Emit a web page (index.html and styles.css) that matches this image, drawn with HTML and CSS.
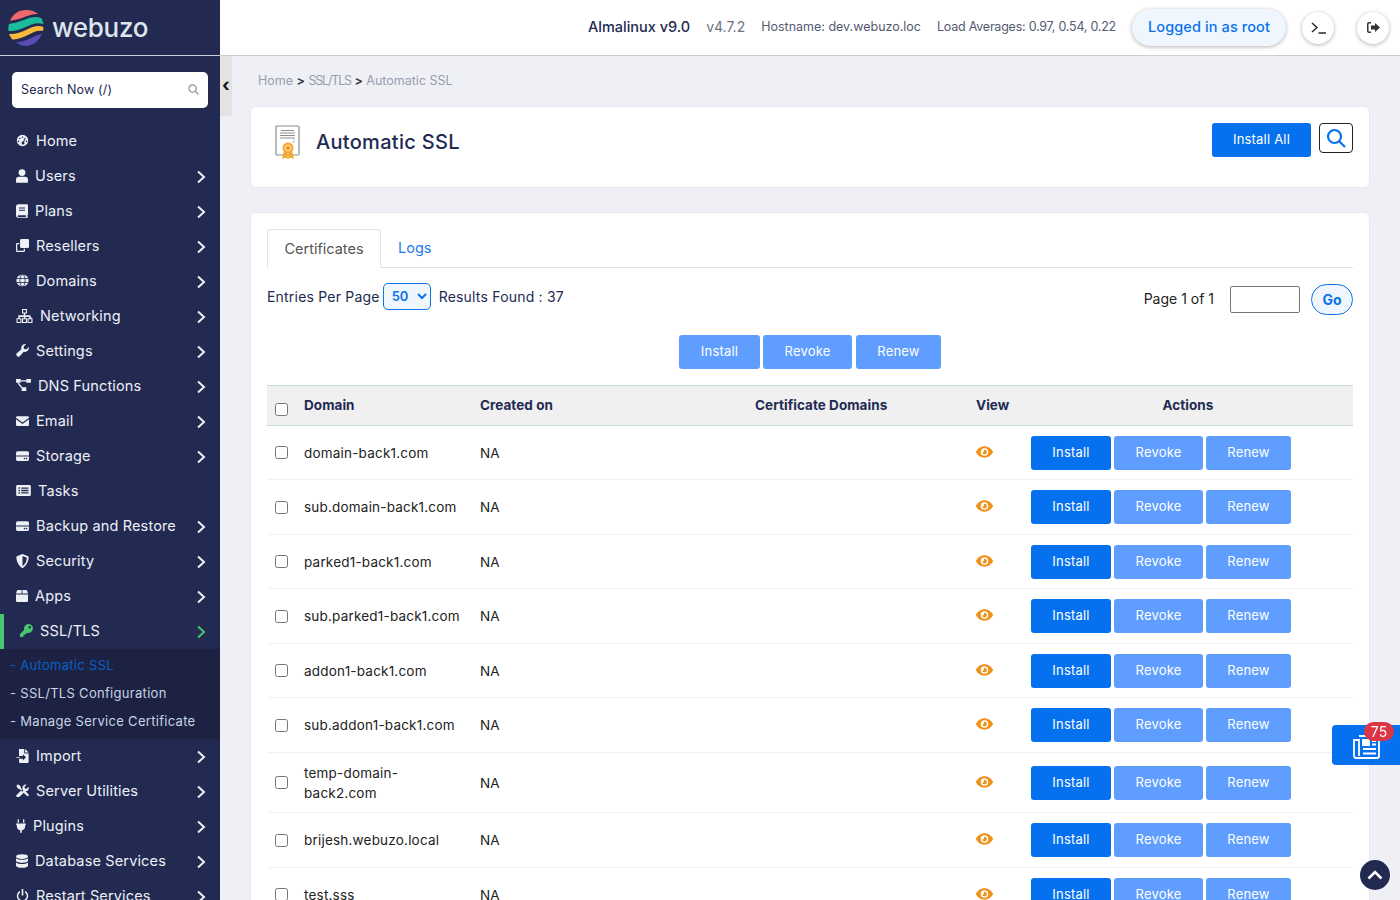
FILE: index.html
```html
<!DOCTYPE html>
<html lang="en">
<head>
    <meta charset="UTF-8">
    <meta name="viewport" content="width=device-width, initial-scale=1.0">
    <title>Automatic SSL - Webuzo</title>
    <link rel="stylesheet" href="styles.css">
</head>
<body>
    <svg class="defs" aria-hidden="true">
        <symbol id="chev" viewBox="0 0 10 14"><path d="M2 1.5 8 7l-6 5.5" fill="none" stroke="currentColor" stroke-width="2"/></symbol>
        <symbol id="i-home" viewBox="0 0 16 16"><path fill-rule="evenodd" d="M8 1a7 7 0 1 1 0 14A7 7 0 0 1 8 1zM8 3a1 1 0 1 0 0 2 1 1 0 0 0 0-2zM4.500 4.500a1 1 0 1 0 0 2 1 1 0 0 0 0-2zM3 8a1 1 0 1 0 0 2 1 1 0 0 0 0-2zM13 8a1 1 0 1 0 0 2 1 1 0 0 0 0-2zM11 4.200 8.700 9.300a1.800 1.800 0 1 0 1.200.5l2-5z"/></symbol>
        <symbol id="i-user" viewBox="0 0 14 16"><circle cx="7" cy="4" r="4"/><path d="M3.500 9h7A3.500 3.500 0 0 1 14 12.500V15a1 1 0 0 1-1 1H1a1 1 0 0 1-1-1v-2.500A3.500 3.500 0 0 1 3.500 9z"/></symbol>
        <symbol id="i-book" viewBox="0 0 14 16"><path fill-rule="evenodd" d="M3 0h10a1 1 0 0 1 1 1v11a1 1 0 0 1-.7.900V14.500a1 1 0 0 1 .7.500v.500a.5.500 0 0 1-.5.500H3a3 3 0 0 1-3-3V3a3 3 0 0 1 3-3zM3.500 4v1.200h7V4zM3.500 6.500v1.200h7V6.500zM3 13a1 1 0 0 0 0 2h8.500v-2z"/></symbol>
        <symbol id="i-clone" viewBox="0 0 16 16"><path d="M6.500 0h8A1.500 1.500 0 0 1 16 1.500v8a1.500 1.500 0 0 1-1.500 1.500h-8A1.500 1.500 0 0 1 5 9.500v-8A1.500 1.500 0 0 1 6.500 0z"/><path d="M1.500 5H4v1.500H1.800a.3.300 0 0 0-.3.300v7.400c0 .2.100.3.300.3h7.400a.3.300 0 0 0 .3-.3V12H11v2.500A1.500 1.500 0 0 1 9.500 16h-8A1.500 1.500 0 0 1 0 14.500v-8A1.500 1.500 0 0 1 1.500 5z"/></symbol>
        <symbol id="i-globe" viewBox="0 0 16 16"><circle cx="8" cy="8" r="7.500"/><g fill="none" stroke="#222a52"><ellipse cx="8" cy="8" rx="3.200" ry="7.500"/><path d="M.5 5.500h15M.5 10.500h15"/></g></symbol>
        <symbol id="i-net" viewBox="0 0 16 14"><path fill-rule="evenodd" d="M5.500 0h5v4.500H8.700v1.800H14v1.700h.9v1.200H16V14h-5V9.200h1.800V8H8.700v1.200h1.800V14h-5V9.200h1.800V8H3.200v1.200H5V14H0V9.200h1.800V6.300h5.500V4.500H5.500zM6.600 1v2.500h2.800V1zM1.100 10.300v2.600h2.800v-2.600zM6.600 10.300v2.600h2.800v-2.600zM12.100 10.300v2.600h2.800v-2.600z"/></symbol>
        <symbol id="i-wrench" viewBox="0 0 16 16"><path d="M15.800 3.700c.3 1.700-.2 3.400-1.400 4.600-1.300 1.300-3.200 1.700-4.800 1.200l-5 5.600a2.100 2.100 0 0 1-3-.1l-.6-.6a2.100 2.100 0 0 1 0-3l5.600-5C6.100 4.700 6.500 2.900 7.800 1.600 9 .4 10.700-.1 12.300.2l-2.900 2.900.5 2.900 2.900.5z"/></symbol>
        <symbol id="i-dns" viewBox="0 0 16 14"><path d="M0 0h5v4H0zM11 0h5v4h-5zM6 9h5v4H6z"/><path d="M5 1.300h6v1.400H5zM2.800 4l4 5-1.100.9-4-5z"/></symbol>
        <symbol id="i-mail" viewBox="0 0 16 12"><path d="M1.500 0h13A1.500 1.500 0 0 1 16 1.500v.6L8 7.900 0 2.100v-.6A1.500 1.500 0 0 1 1.500 0z"/><path d="M0 3.900l8 5.800 8-5.800v6.600a1.500 1.500 0 0 1-1.500 1.500h-13A1.500 1.500 0 0 1 0 10.500z"/></symbol>
        <symbol id="i-hdd" viewBox="0 0 16 12"><path d="M2 0h12a2 2 0 0 1 2 2v3.500H0V2a2 2 0 0 1 2-2z"/><path fill-rule="evenodd" d="M0 6.500h16V10a2 2 0 0 1-2 2H2a2 2 0 0 1-2-2zM10.500 8.200a1 1 0 1 0 0 2 1 1 0 0 0 0-2zM13 8.200a1 1 0 1 0 0 2 1 1 0 0 0 0-2z"/></symbol>
        <symbol id="i-list" viewBox="0 0 16 12"><path fill-rule="evenodd" d="M1.500 0h13A1.500 1.500 0 0 1 16 1.500v9a1.500 1.500 0 0 1-1.500 1.500h-13A1.500 1.500 0 0 1 0 10.500v-9A1.500 1.500 0 0 1 1.500 0zM2.500 2.500v1.600h1.600V2.500zM5.500 2.600v1.400h8V2.600zM2.500 5.200v1.600h1.600V5.200zM5.500 5.300v1.400h8V5.300zM2.500 7.900v1.600h1.600V7.900zM5.500 8v1.400h8V8z"/></symbol>
        <symbol id="i-shield" viewBox="0 0 14 16"><path fill-rule="evenodd" d="M7 0l6.400 2.600c.4.200.6.500.6.900C14 9.500 10.500 14.200 7.400 15.900a1 1 0 0 1-.8 0C3.500 14.200 0 9.500 0 3.500c0-.4.200-.7.600-.9zM7 2.300v11.600c2.500-1.400 4.800-5 5-9.500z"/></symbol>
        <symbol id="i-box" viewBox="0 0 14 14"><path d="M2.500 0h4v4.200H0L1 1a1.500 1.500 0 0 1 1.500-1zM7.500 0h4A1.500 1.500 0 0 1 13 1l1 3.200H7.500zM0 5.200h14v7.300a1.500 1.500 0 0 1-1.500 1.500h-11A1.500 1.500 0 0 1 0 12.500z"/></symbol>
        <symbol id="i-key" viewBox="0 0 16 16"><path fill-rule="evenodd" d="M10.500 0a5.500 5.500 0 1 1-1.600 10.800l-1.400 1.500H5.800v1.900H3.900V16H.8a.8.8 0 0 1-.8-.8v-2.400c0-.2.100-.4.200-.5l5.100-5.100A5.500 5.500 0 0 1 10.500 0zM12 2.600a1.500 1.500 0 1 0 0 3 1.500 1.500 0 0 0 0-3z"/></symbol>
        <symbol id="i-import" viewBox="0 0 14 16"><path fill-rule="evenodd" d="M3.500 0H9v4.200c0 .4.400.8.800.8H14v9.500a1.500 1.500 0 0 1-1.500 1.500h-8A1.500 1.500 0 0 1 3 14.500V11h4.500v2l3.500-3.500L7.500 6v2H3V.5c0-.3.200-.5.500-.5z"/><path d="M10 0l4 4h-4zM0 9h4v1H0z"/></symbol>
        <symbol id="i-tools" viewBox="0 0 16 16"><path d="M.4 2.400 2.400.4l3.500 2.700v1.700l3.200 3.200-1.400 1.400L4.500 6.200H2.900zM15.400 3.500l-2.400 2.400-2.100-.4-.4-2.100L12.900.9a4 4 0 0 0-4.800 5.200L1 13.100a2.100 2.100 0 0 0 3 3l5.400-5.400 3.900 3.900a1.400 1.400 0 0 0 2-2l-3.600-3.600a4 4 0 0 0 3.700-5.500z"/></symbol>
        <symbol id="i-plug" viewBox="0 0 12 16"><path d="M2 0h1.500v4h-1.500zM8.500 0H10v4H8.500zM0 5h12v1.500H11v1.700A5 5 0 0 1 7 13v3H5v-3A5 5 0 0 1 1 8.200V6.500H0z"/></symbol>
        <symbol id="i-db" viewBox="0 0 14 16"><ellipse cx="7" cy="2.800" rx="7" ry="2.800"/><path d="M0 4.700C1.500 6 4.200 6.500 7 6.500s5.500-.5 7-1.800v3C14 9 10.900 10 7 10S0 9 0 7.700zM0 9.700C1.500 11 4.200 11.500 7 11.500s5.500-.5 7-1.800v3.500c0 1.500-3.100 2.800-7 2.800s-7-1.300-7-2.800z"/></symbol>
        <symbol id="i-power" viewBox="0 0 16 16"><path d="M7 0h2v8H7z"/><path d="M4.800 2.200v2.300a5.200 5.200 0 1 0 6.400 0V2.200a7 7 0 1 1-6.400 0z"/></symbol>
        <symbol id="i-eye" viewBox="0 0 18 12"><path fill-rule="evenodd" d="M9 0c4 0 7.300 2.600 8.900 5.500a1 1 0 0 1 0 1C16.300 9.400 13 12 9 12S1.700 9.400.1 6.500a1 1 0 0 1 0-1C1.700 2.600 5 0 9 0zM9 2a4 4 0 1 0 0 8 4 4 0 0 0 0-8zM9 3.500a2.500 2.500 0 1 1-2.400 3.200c.8.300 2.200-.6 1.900-2.100-.1-.5-.1-1 .5-1.100z"/></symbol>
    </svg>

    <aside class="sidebar">
        <div class="logo">
            <svg class="logo-mark" width="36" height="36" viewBox="0 0 36 36">
                <path fill="#f0686a" d="M2 11C5 3 12 0 18 0c5 0 9 1.500 12 4-6 0-11 2-16 4-4 1.500-9 2-12 3z"/>
                <path fill="#1bbc9b" d="M.5 21C0 18 .5 16 1 14c5-1 10-2 15-4 6-2.500 12-4 17-2 1.500 2 2 4 2.500 6-6.500-2-11.500 0-16.500 2.500C13 19.500 6 21.500.5 21z"/>
                <path fill="#f6b93b" d="M4 29c-1.500-2-2.500-3.500-3-5 6 .5 12-1.500 18-4.500s11-4.500 16.500-2.500l-.5 4c-6-1-10 1.500-15 4s-11 4.500-16 4.500z"/>
                <path fill="#5b4bb7" d="M8 32c5 .5 10-1.500 14-3.500s8-4 12-4.500c-3 7-9 12-16 12-4 0-7-1.500-10-4z"/>
            </svg>
            <span class="logo-text">webuzo</span>
        </div>
        <div class="search-box">
            <span>Search Now (/)</span>
            <svg width="11" height="11" viewBox="0 0 12 12" fill="none" stroke="#8a8d9c" stroke-width="1.300"><circle cx="5" cy="5" r="4"/><path d="M8 8l3.500 3.500"/></svg>
        </div>
        <nav class="menu">
            <a class="menu-item"><svg width="13" height="13"><use href="#i-home"/></svg><span>Home</span></a>
            <a class="menu-item"><svg width="12" height="14"><use href="#i-user"/></svg><span>Users</span><svg class="chev"><use href="#chev"/></svg></a>
            <a class="menu-item"><svg width="12" height="14"><use href="#i-book"/></svg><span>Plans</span><svg class="chev"><use href="#chev"/></svg></a>
            <a class="menu-item"><svg width="13" height="13"><use href="#i-clone"/></svg><span>Resellers</span><svg class="chev"><use href="#chev"/></svg></a>
            <a class="menu-item"><svg width="13" height="13"><use href="#i-globe"/></svg><span>Domains</span><svg class="chev"><use href="#chev"/></svg></a>
            <a class="menu-item"><svg width="17" height="14"><use href="#i-net"/></svg><span>Networking</span><svg class="chev"><use href="#chev"/></svg></a>
            <a class="menu-item"><svg width="13" height="13"><use href="#i-wrench"/></svg><span>Settings</span><svg class="chev"><use href="#chev"/></svg></a>
            <a class="menu-item"><svg width="15" height="13"><use href="#i-dns"/></svg><span>DNS Functions</span><svg class="chev"><use href="#chev"/></svg></a>
            <a class="menu-item"><svg width="13" height="10"><use href="#i-mail"/></svg><span>Email</span><svg class="chev"><use href="#chev"/></svg></a>
            <a class="menu-item"><svg width="13" height="10"><use href="#i-hdd"/></svg><span>Storage</span><svg class="chev"><use href="#chev"/></svg></a>
            <a class="menu-item"><svg width="15" height="11"><use href="#i-list"/></svg><span>Tasks</span></a>
            <a class="menu-item"><svg width="13" height="10"><use href="#i-hdd"/></svg><span>Backup and Restore</span><svg class="chev"><use href="#chev"/></svg></a>
            <a class="menu-item"><svg width="13" height="14"><use href="#i-shield"/></svg><span>Security</span><svg class="chev"><use href="#chev"/></svg></a>
            <a class="menu-item"><svg width="12" height="12"><use href="#i-box"/></svg><span>Apps</span><svg class="chev"><use href="#chev"/></svg></a>
            <a class="menu-item active"><svg width="13" height="13"><use href="#i-key"/></svg><span>SSL/TLS</span><svg class="chev"><use href="#chev"/></svg></a>
            <div class="submenu">
                <a class="current">- Automatic SSL</a>
                <a>- SSL/TLS Configuration</a>
                <a>- Manage Service Certificate</a>
            </div>
            <a class="menu-item"><svg width="13" height="14"><use href="#i-import"/></svg><span>Import</span><svg class="chev"><use href="#chev"/></svg></a>
            <a class="menu-item"><svg width="13" height="13"><use href="#i-tools"/></svg><span>Server Utilities</span><svg class="chev"><use href="#chev"/></svg></a>
            <a class="menu-item"><svg width="10" height="14"><use href="#i-plug"/></svg><span>Plugins</span><svg class="chev"><use href="#chev"/></svg></a>
            <a class="menu-item"><svg width="12" height="14"><use href="#i-db"/></svg><span>Database Services</span><svg class="chev"><use href="#chev"/></svg></a>
            <a class="menu-item"><svg width="13" height="13"><use href="#i-power"/></svg><span>Restart Services</span><svg class="chev"><use href="#chev"/></svg></a>
        </nav>
    </aside>

    <div class="content">
        <header class="topbar">
            <span class="os-name">Almalinux v9.0</span>
            <span class="version">v4.7.2</span>
            <span class="meta">Hostname: dev.webuzo.loc</span>
            <span class="meta load">Load Averages: 0.97, 0.54, 0.22</span>
            <a class="logged-in"><span>Logged in as root</span></a>
            <a class="round-btn"><svg width="15" height="12" viewBox="0 0 15 12" fill="none" stroke="#2a2a2a" stroke-width="1.500"><path d="M1 1l5 4.500L1 10M7.500 11H15"/></svg></a>
            <a class="round-btn"><svg width="13" height="11" viewBox="0 0 13 11" fill="#333"><path d="M4 0v1.500H2a.5.500 0 0 0-.5.500v7c0 .3.200.5.500.5h2V11H2a2 2 0 0 1-2-2V2a2 2 0 0 1 2-2z"/><path d="M8 1l5 4.500L8 10V7.500H4v-4h4z"/></svg></a>
        </header>
        <a class="collapse-handle">&#8249;</a>

        <main class="page">
            <div class="breadcrumb">Home <b>&gt;</b> <span class="crumb-caps">SSL/TLS</span> <b>&gt;</b> Automatic SSL</div>

            <section class="card title-card">
                <svg class="cert-icon" width="26" height="35" viewBox="0 0 26 35">
                    <rect x="1" y="1" width="23" height="29" rx="1" fill="#fff" stroke="#8d8d8d" stroke-width="1.200"/>
                    <path d="M6 5.500h13M5 8h15M5 10.500h15M5 13h15" stroke="#8d8d8d" stroke-width="1.100"/>
                    <path d="M17 17h3M18 15h2" stroke="#c4c4c4"/>
                    <path d="M9 26l-2 8 3-1.500L13 34l-1-7zM17 26l2 8-3-1.500L13 34l1-7z" fill="#f5a623"/>
                    <circle cx="13" cy="23" r="5.500" fill="#f5a623"/>
                    <circle cx="13" cy="23" r="3.500" fill="#fbd38d"/>
                    <circle cx="13" cy="23" r="1.800" fill="#e8890c"/>
                </svg>
                <h1>Automatic SSL</h1>
                <button class="btn btn-primary install-all">Install All</button>
                <button class="search-toggle"><svg width="20" height="20" viewBox="0 0 20 20" fill="none" stroke="#0671ee" stroke-width="2.200"><circle cx="8.500" cy="8.500" r="6.500"/><path d="M13.500 13.500 19 19"/></svg></button>
            </section>

            <section class="card list-card">
                <div class="tabs">
                    <a class="tab active">Certificates</a>
                    <a class="tab">Logs</a>
                </div>

                <div class="list-controls">
                    <label>Entries Per Page</label>
                    <select class="per-page"><option>50</option></select>
                    <span>Results Found : 37</span>
                    <span class="page-count">Page 1 of 1</span>
                    <input type="text" class="page-input">
                    <button class="go-btn">Go</button>
                </div>

                <div class="bulk-actions">
                    <button class="btn btn-light btn-install">Install</button>
                    <button class="btn btn-light btn-revoke">Revoke</button>
                    <button class="btn btn-light btn-renew">Renew</button>
                </div>

                <table class="cert-table">
                    <thead>
                        <tr>
                            <th class="col-check"><input type="checkbox"></th>
                            <th class="col-domain">Domain</th>
                            <th class="col-created">Created on</th>
                            <th class="col-cert">Certificate Domains</th>
                            <th class="col-view">View</th>
                            <th class="col-actions">Actions</th>
                        </tr>
                    </thead>
                    <tbody>
                        <tr>
                            <td><input type="checkbox"></td><td>domain-back1.com</td><td>NA</td><td></td>
                            <td><svg class="eye" width="17" height="12"><use href="#i-eye"/></svg></td>
                            <td class="row-actions"><button class="btn btn-primary btn-install">Install</button><button class="btn btn-light btn-revoke">Revoke</button><button class="btn btn-light btn-renew">Renew</button></td>
                        </tr>
                        <tr>
                            <td><input type="checkbox"></td><td>sub.domain-back1.com</td><td>NA</td><td></td>
                            <td><svg class="eye" width="17" height="12"><use href="#i-eye"/></svg></td>
                            <td class="row-actions"><button class="btn btn-primary btn-install">Install</button><button class="btn btn-light btn-revoke">Revoke</button><button class="btn btn-light btn-renew">Renew</button></td>
                        </tr>
                        <tr>
                            <td><input type="checkbox"></td><td>parked1-back1.com</td><td>NA</td><td></td>
                            <td><svg class="eye" width="17" height="12"><use href="#i-eye"/></svg></td>
                            <td class="row-actions"><button class="btn btn-primary btn-install">Install</button><button class="btn btn-light btn-revoke">Revoke</button><button class="btn btn-light btn-renew">Renew</button></td>
                        </tr>
                        <tr>
                            <td><input type="checkbox"></td><td>sub.parked1-back1.com</td><td>NA</td><td></td>
                            <td><svg class="eye" width="17" height="12"><use href="#i-eye"/></svg></td>
                            <td class="row-actions"><button class="btn btn-primary btn-install">Install</button><button class="btn btn-light btn-revoke">Revoke</button><button class="btn btn-light btn-renew">Renew</button></td>
                        </tr>
                        <tr>
                            <td><input type="checkbox"></td><td>addon1-back1.com</td><td>NA</td><td></td>
                            <td><svg class="eye" width="17" height="12"><use href="#i-eye"/></svg></td>
                            <td class="row-actions"><button class="btn btn-primary btn-install">Install</button><button class="btn btn-light btn-revoke">Revoke</button><button class="btn btn-light btn-renew">Renew</button></td>
                        </tr>
                        <tr>
                            <td><input type="checkbox"></td><td>sub.addon1-back1.com</td><td>NA</td><td></td>
                            <td><svg class="eye" width="17" height="12"><use href="#i-eye"/></svg></td>
                            <td class="row-actions"><button class="btn btn-primary btn-install">Install</button><button class="btn btn-light btn-revoke">Revoke</button><button class="btn btn-light btn-renew">Renew</button></td>
                        </tr>
                        <tr>
                            <td><input type="checkbox"></td><td>temp-domain-<br>back2.com</td><td>NA</td><td></td>
                            <td><svg class="eye" width="17" height="12"><use href="#i-eye"/></svg></td>
                            <td class="row-actions"><button class="btn btn-primary btn-install">Install</button><button class="btn btn-light btn-revoke">Revoke</button><button class="btn btn-light btn-renew">Renew</button></td>
                        </tr>
                        <tr>
                            <td><input type="checkbox"></td><td>brijesh.webuzo.local</td><td>NA</td><td></td>
                            <td><svg class="eye" width="17" height="12"><use href="#i-eye"/></svg></td>
                            <td class="row-actions"><button class="btn btn-primary btn-install">Install</button><button class="btn btn-light btn-revoke">Revoke</button><button class="btn btn-light btn-renew">Renew</button></td>
                        </tr>
                        <tr>
                            <td><input type="checkbox"></td><td>test.sss</td><td>NA</td><td></td>
                            <td><svg class="eye" width="17" height="12"><use href="#i-eye"/></svg></td>
                            <td class="row-actions"><button class="btn btn-primary btn-install">Install</button><button class="btn btn-light btn-revoke">Revoke</button><button class="btn btn-light btn-renew">Renew</button></td>
                        </tr>
                    </tbody>
                </table>
            </section>
        </main>
    </div>

    <a class="news-btn">
        <svg width="27" height="24" viewBox="0 0 27 24" fill="none" stroke="#fff" stroke-width="1.800"><path d="M6 1h20v20a2 2 0 0 1-2 2H3a2 2 0 0 1-2-2V5h5v16"/><path fill="#fff" d="M10 5h6v5h-6z"/><path d="M19 6h4M19 9.500h4M10 14h13M10 18.500h13"/></svg>
        <span class="news-count">75</span>
    </a>
    <a class="back-top"><svg width="16" height="10" viewBox="0 0 16 10" fill="none" stroke="#fff" stroke-width="2.600"><path d="M1.500 8.500 8 2l6.500 6.500"/></svg></a>
</body>
</html>
```

FILE: styles.css
```css
* {
    box-sizing: border-box;
}

html, body {
    height: 100%;
}

body {
    display: flex;
    margin: 0;
    overflow: hidden;
    font-family: "Inter", "Liberation Sans", sans-serif;
    font-size: 13.5px;
    color: #222a52;
    background-color: #eff0f6;
}

.defs {
    display: none;
}

button {
    font-family: inherit;
    cursor: pointer;
}

/* sidebar */
.sidebar {
    flex: 0 0 220px;
    height: 100%;
    overflow: hidden;
    background-color: #222a52;
    color: #eef0f6;
}

.logo {
    display: flex;
    align-items: center;
    gap: 8px;
    height: 56px;
    padding-left: 8px;
    border-bottom: 1px solid #ccced6;
}

.logo-text {
    font-size: 26px;
    font-weight: 500;
    letter-spacing: -0.3px;
    color: #dfe5ec;
}

.search-box {
    display: flex;
    align-items: center;
    justify-content: space-between;
    height: 36px;
    margin: 16px 12px 16px;
    padding: 0 9px 2px;
    background-color: #fff;
    border-radius: 5px;
    font-size: 12.5px;
    letter-spacing: 0.15px;
    color: #222a52;
}

.menu-item {
    display: flex;
    align-items: center;
    gap: 7px;
    height: 35px;
    padding: 0 14px 2px 16px;
    font-size: 14.5px;
    letter-spacing: 0.15px;
    white-space: nowrap;
}

.menu-item svg {
    flex: none;
    fill: currentColor;
}

.menu-item .chev {
    width: 10px;
    height: 14px;
    margin-top: 2px;
    margin-left: auto;
    fill: none;
}

.menu-item.active {
    border-left: 4px solid #4bc66f;
}

.menu-item.active svg {
    color: #4bc66f;
}

.submenu {
    display: flex;
    flex-direction: column;
    height: 90px;
    padding: 2px 0 0 10px;
    background-color: #1d2242;
    font-size: 13px;
    letter-spacing: 0.3px;
    color: #c5d5e4;
}

.submenu a {
    height: 28px;
    line-height: 28px;
}

.submenu .current {
    color: #0b5fc8;
}

/* top bar */
.content {
    position: relative;
    flex: 1;
    min-width: 0;
    height: 100%;
}

.topbar {
    display: flex;
    align-items: center;
    justify-content: flex-end;
    height: 56px;
    padding-right: 11px;
    background-color: #fff;
    border-bottom: 1px solid #ccced6;
}

.os-name {
    margin: 0 16px 2px 0;
    font-size: 14.5px;
    font-weight: 500;
}

.version {
    margin: 0 16px 2px 0;
    font-size: 14px;
    color: #6f7285;
}

.meta {
    margin: 0 16px 2px 0;
    font-size: 12.5px;
    color: #555a72;
}

.meta.load {
    letter-spacing: -0.23px;
}

.logged-in {
    display: flex;
    align-items: center;
    justify-content: center;
    width: 154px;
    height: 37px;
    margin-right: 16px;
    padding-bottom: 2px;
    background-color: #f0f6fe;
    border-radius: 20px;
    box-shadow: 0 1px 4px rgba(0, 0, 0, 0.3);
    font-size: 14.5px;
    font-weight: 500;
    letter-spacing: 0.1px;
    color: #0b72e8;
}

.round-btn {
    display: flex;
    align-items: center;
    justify-content: center;
    width: 32px;
    height: 32px;
    margin-left: 23px;
    background-color: #fff;
    border-radius: 50%;
    box-shadow: 0 1px 4px rgba(0, 0, 0, 0.3);
}

.logged-in + .round-btn {
    margin-left: 0;
}

.collapse-handle {
    position: absolute;
    top: 56px;
    left: 0;
    width: 12px;
    height: 60px;
    background-color: #e3e3e3;
    font-size: 18px;
    font-weight: 700;
    line-height: 58px;
    text-align: center;
    color: #111;
}

/* page */
.page {
    padding: 0 30px;
}

.breadcrumb {
    height: 50px;
    padding: 17px 0 0 8px;
    font-size: 12.5px;
    line-height: 16px;
    color: #9a9cb0;
}

.breadcrumb b {
    color: #333;
    font-weight: 600;
}

.crumb-caps {
    letter-spacing: -1.2px;
}

.card {
    background-color: #fff;
    border: 1px solid #e8e9f0;
    border-radius: 6px;
}

.title-card {
    display: flex;
    align-items: flex-start;
    height: 82px;
    margin-bottom: 24px;
    padding: 16px 16px 0 24px;
}

.cert-icon {
    margin: 2px 15px 0 0;
}

.title-card h1 {
    flex: 1;
    margin: 7px 0 0;
    font-size: 20px;
    font-weight: 500;
    letter-spacing: 0.3px;
    line-height: 25px;
}

.btn {
    height: 34px;
    padding: 0 0 2px;
    border: none;
    border-radius: 3px;
    font-size: 13px;
    letter-spacing: 0.2px;
    color: #fff;
}

.btn-primary {
    background-color: #0671ee;
}

.btn-light {
    background-color: #5f9eff;
}

.btn-install {
    width: 81px;
}

.row-actions .btn-install {
    width: 80px;
}

.btn-revoke {
    width: 89px;
    margin-left: 3px;
}

.btn-renew {
    width: 85px;
    margin-left: 3px;
}

.install-all {
    width: 99px;
}

.search-toggle {
    display: flex;
    align-items: center;
    justify-content: center;
    width: 34px;
    height: 30px;
    margin-left: 8px;
    padding: 0;
    background-color: #fff;
    border: 1px solid #222;
    border-radius: 4px;
}

.list-card {
    padding: 16px;
}

.tabs {
    display: flex;
    height: 39px;
    border-bottom: 1px solid #dee2e6;
}

.tab {
    height: 39px;
    padding: 0 17px;
    font-size: 14.5px;
    line-height: 37px;
    color: #1d7af0;
}

.tab.active {
    width: 114px;
    padding: 0;
    background-color: #fff;
    border: 1px solid #dee2e6;
    border-bottom-color: #fff;
    border-radius: 4px 4px 0 0;
    text-align: center;
    color: #555;
}

.list-controls {
    display: flex;
    align-items: center;
    height: 46px;
    padding-top: 10px;
    font-size: 14px;
    letter-spacing: 0.2px;
}

.per-page {
    width: 48px;
    height: 27px;
    margin: 0 8px 0 3px;
    padding-left: 4px;
    background-color: #f0f6fe;
    border: 1px solid #0b72e8;
    border-radius: 5px;
    font-family: inherit;
    font-size: 13px;
    font-weight: 600;
    color: #0b72e8;
}

.page-count {
    margin: 4px 0 0 auto;
    letter-spacing: 0;
    color: #222;
}

.page-input {
    width: 70px;
    height: 27px;
    margin: 6px 11px 0 16px;
    border: 1px solid #767676;
    border-radius: 2px;
}

.go-btn {
    width: 42px;
    height: 31px;
    margin-top: 6px;
    padding: 0;
    background-color: #f0f6fe;
    border: 1px solid #0b72e8;
    border-radius: 16px;
    font-size: 14px;
    font-weight: 700;
    color: #0b72e8;
}

.bulk-actions {
    display: flex;
    justify-content: center;
    height: 71px;
    padding-top: 21px;
}

.bulk-actions .btn-renew {
    margin-left: 4px;
}

.cert-table {
    width: 100%;
    border-collapse: collapse;
    table-layout: fixed;
    font-size: 13.5px;
}

.cert-table input[type="checkbox"] {
    display: block;
    width: 13px;
    height: 13px;
    margin: 0;
}

.cert-table th {
    height: 39.500px;
    padding: 0 8px;
    background-color: #f0f0f0;
    border-top: 1px solid #c6dbe2;
    border-bottom: 1px solid #c6dbe2;
    font-weight: 700;
    letter-spacing: 0.05px;
    text-align: left;
}

.cert-table th.col-check input {
    margin: 8px 0 0;
}

.col-check { width: 29px; }
.col-domain { width: 176px; }
.col-created { width: 275px; }
.col-cert { width: 221px; }
.col-view { width: 55px; }
.cert-table th.col-actions { text-align: center; }

.cert-table td {
    height: 54.500px;
    padding: 10px 8px 9.500px;
    border-bottom: 1px solid #eaf4fd;
    line-height: 20px;
    letter-spacing: 0.2px;
    color: #222;
}

.row-actions {
    white-space: nowrap;
}

.eye {
    display: block;
    margin-bottom: 2px;
    fill: #f0911a;
}

/* floating bits */
.news-btn {
    position: fixed;
    top: 725px;
    right: 0;
    display: flex;
    align-items: center;
    justify-content: center;
    width: 68px;
    height: 40px;
    padding-top: 3px;
    background-color: #0671ee;
    border-radius: 4px 0 0 4px;
}

.news-count {
    position: absolute;
    top: -3px;
    left: 32px;
    width: 30px;
    height: 19px;
    background-color: #dc3545;
    border-radius: 10px;
    font-size: 14px;
    line-height: 19px;
    text-align: center;
    color: #fff;
}

.back-top {
    position: fixed;
    top: 860px;
    left: 1360px;
    display: flex;
    align-items: center;
    justify-content: center;
    width: 30px;
    height: 30px;
    background-color: #222a52;
    border-radius: 50%;
}
```
